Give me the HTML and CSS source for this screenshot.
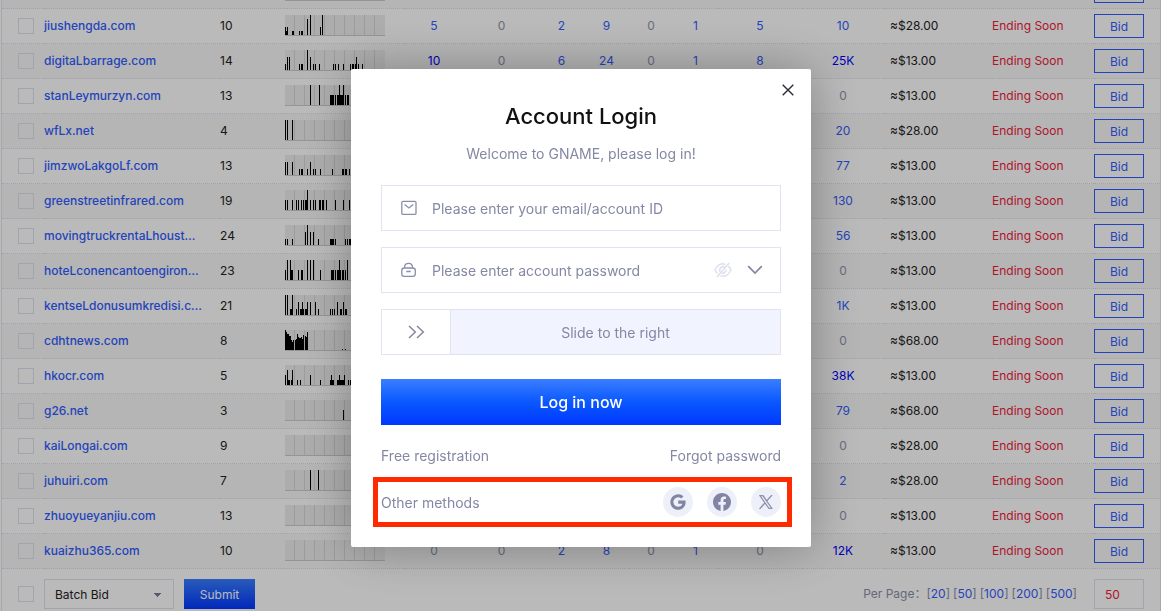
FILE: index.html
```html
<!DOCTYPE html>
<html lang="en">
<head>
<meta charset="utf-8">
<title>GNAME - Account Login</title>
<link rel="stylesheet" href="styles.css">
</head>
<body>
<main class="page">
  <table class="domains">
    <colgroup>
      <col class="c-check"><col><col class="c-length"><col class="c-chart">
      <col class="c-60"><col class="c-75"><col class="c-45"><col class="c-45"><col class="c-44"><col class="c-45"><col class="c-84"><col class="c-82">
      <col class="c-price"><col class="c-status"><col class="c-action">
    </colgroup>
    <tbody id="rows"></tbody>
  </table>
  <div class="batch">
    <input class="check" type="checkbox" aria-label="Select all">
    <select class="batch-select" aria-label="Batch action"><option>Batch Bid</option></select>
    <button class="submit" type="button">Submit</button>
    <div class="per-page">
      <label for="size">Per Page：</label>
      <nav class="sizes">
        <span>[<a href="#">20</a>]</span>
        <span>[<a href="#">50</a>]</span>
        <span>[<a href="#">100</a>]</span>
        <span>[<a href="#">200</a>]</span>
        <span>[<a href="#">500</a>]</span>
      </nav>
    </div>
    <input class="size" id="size" type="text" value="50">
  </div>
</main>

<div class="overlay">
  <section class="modal" role="dialog" aria-labelledby="title">
    <button class="close" type="button" aria-label="Close">
      <svg width="12" height="12" viewBox="0 0 12 12"><path d="M.7.7l10.6 10.6M11.3.7L.7 11.3" stroke="#2b2c36" stroke-width="1.4" fill="none"/></svg>
    </button>
    <h1 class="title" id="title">Account Login</h1>
    <p class="subtitle">Welcome to GNAME, please log in!</p>
    <form class="form">
      <div class="field">
        <svg class="icon" width="16" height="16" viewBox="0 0 16 16" fill="none" stroke="#8a8ea8" stroke-width="1.3"><rect x=".8" y="1.4" width="14.2" height="13" rx="1.2"/><path d="M3.6 4.6L7.9 8l4.3-3.4"/></svg>
        <input class="text" type="text" placeholder="Please enter your email/account ID" aria-label="Email or account ID">
      </div>
      <div class="field">
        <svg class="icon" width="16" height="16" viewBox="0 0 16 16" fill="none" stroke="#8a8ea8" stroke-width="1.3"><path d="M3.2 6h8.600c1.600 0 2.500.7 2.500 2.300v3.400c0 1.600-.9 2.600-2.500 2.600H3.200C1.600 14.300.8 13.300.8 11.700V8.300C.8 6.700 1.600 6 3.200 6zM3.400 6C3.400 2.700 5 1.300 7.500 1.300S11.600 2.700 11.600 6M5.300 9.500h4.400"/></svg>
        <input class="text" type="password" placeholder="Please enter account password" aria-label="Account password">
        <button class="bare" type="button" aria-label="Show password">
          <svg width="18" height="16" viewBox="0 0 18 16" fill="none" stroke="#dfe1ef" stroke-width="1.600"><path d="M11.500 2.400C6.500.800 2.700 3.500 1 8c.6 1.500 1.500 2.700 2.600 3.700M14.300 4.200C15.500 5.200 16.400 6.500 17 8c-1.700 4.300-5.700 7-10.600 5.700M10.800 5.400a3.200 3.200 0 0 0-4.600 4.300M12 7.800a3.200 3.200 0 0 1-4.200 3.200M15.200.9L3 15"/></svg>
        </button>
        <button class="bare" type="button" aria-label="More">
          <svg width="16" height="10" viewBox="0 0 16 10"><path d="M1.200 1.200L8 8l6.800-6.800" fill="none" stroke="#83879f" stroke-width="1.700"/></svg>
        </button>
      </div>
      <div class="slider">
        <button class="handle" type="button" aria-label="Slide">
          <svg width="17" height="14" viewBox="0 0 17 14"><path d="M1 1l6.300 6L1 13M9 1l6.300 6L9 13" fill="none" stroke="#83879f" stroke-width="1.500"/></svg>
        </button>
        <span class="slider-label">Slide to the right</span>
      </div>
      <button class="login" type="button">Log in now</button>
    </form>
    <div class="links"><a href="#">Free registration</a><a href="#">Forgot password</a></div>
    <div class="methods">
      <span>Other methods</span>
      <a class="social" href="#" aria-label="Google">
        <svg width="16" height="16" viewBox="0 0 16 16"><path d="M8.200 6.500h7.300c.8 5-2.300 9.300-7.300 9.300A7.800 7.800 0 1 1 13.500 2.300l-2.300 2.200A4.700 4.700 0 1 0 8.200 12.700c2.200 0 3.600-1.200 4.100-3H8.200z" fill="#8185a3"/></svg>
      </a>
      <a class="social" href="#" aria-label="Facebook">
        <svg width="18" height="18" viewBox="0 0 24 24"><path d="M24 12.070C24 5.440 18.630.070 12 .070S0 5.440 0 12.070c0 5.990 4.390 10.950 10.130 11.850v-8.380H7.080v-3.470h3.050V9.430c0-3.010 1.790-4.670 4.530-4.670 1.310 0 2.690.24 2.690.24v2.950h-1.510c-1.490 0-1.960.93-1.960 1.870v2.250h3.330l-.53 3.470h-2.800v8.380C19.610 23.020 24 18.060 24 12.070z" fill="#8185a3"/></svg>
      </a>
      <a class="social" href="#" aria-label="X">
        <svg width="14" height="14" viewBox="-4 -4 308 308"><path d="M178.570 127.150 290.270 0h-26.460l-97.030 110.380L89.340 0H0l117.130 166.930L0 300.250h26.460l102.400-116.590 81.800 116.590H300M36.010 19.540h40.650l187.130 262.130h-40.660" fill="#8185a3" stroke="#8185a3" stroke-width="9"/></svg>
      </a>
    </div>
  </section>
</div>
<script src="app.js"></script>
</body>
</html>
```
FILE: styles.css
```css
* { box-sizing: border-box; }
body {
  margin: 0;
  font-family: Inter, "Noto Sans CJK SC", sans-serif;
  font-size: 12px;
  color: #222;
}
button, input, select { font: inherit; color: inherit; border-radius: 0; }
a { color: #315dff; text-decoration: none; }

.page {
  height: 100vh;
  overflow: hidden;
  margin: 0 0 0 1px;
  border: solid #e4e7f0;
  border-width: 0 1px;
  background: #fff;
}
.domains {
  width: 100%;
  margin-top: -26px;
  table-layout: fixed;
  border-collapse: separate;
  border-spacing: 0;
}
.c-check { width: 42px; }
.c-length { width: 65px; }
.c-chart { width: 119px; }
.c-44 { width: 44px; }
.c-45 { width: 45px; }
.c-60 { width: 60px; }
.c-75 { width: 75px; }
.c-82 { width: 82px; }
.c-84 { width: 84px; }
.c-price { width: 108px; }
.c-status { width: 102px; }
.c-action { width: 66px; }

.domains td {
  height: 35px;
  padding: 0 0 2px;
  border-bottom: 1px dotted #dcdfec;
  vertical-align: middle;
  white-space: nowrap;
}
.domains tr:nth-child(odd) { background: #f9f9f9; }
.domains .select-cell { padding: 0 0 0 16px; }
.domains .chart-cell { padding: 0 0 1px; }
.domains .action { padding: 0; }
.domains .count { text-align: center; }
.domains .price { padding-left: 6px; }
.name { font-weight: 500; }
.zero { color: #9094a8; }
.high { color: #0000ff; }
.status { color: #f01b3b; }
.chart { display: block; }

.check {
  appearance: none;
  display: block;
  flex: none;
  width: 16px;
  height: 16px;
  margin: 0;
  border: 1px solid #dde1ec;
}
.bid {
  display: block;
  width: 50px;
  height: 24px;
  padding: 0;
  border: 1px solid #315dff;
  background: none;
  color: #315dff;
}

.batch {
  display: flex;
  align-items: center;
  gap: 10px;
  padding: 10px 16px;
}
.batch-select {
  appearance: none;
  width: 130px;
  height: 30px;
  padding: 0 10px;
  border: 1px solid #dde1ec;
  background:
    linear-gradient(to bottom right, #777c96 50%, transparent 50%) 113px 13px / 4px 4px no-repeat,
    linear-gradient(to bottom left, #777c96 50%, transparent 50%) 109px 13px / 4px 4px no-repeat,
    transparent;
}
.submit {
  width: 71px;
  height: 30px;
  padding: 0;
  border: 0;
  background: linear-gradient(#3a7eff, #0038ff);
  color: #fff;
}
.per-page {
  display: flex;
  margin-left: auto;
  padding-right: 7px;
  color: #8a8ea8;
  line-height: 18px;
}
.sizes { display: flex; gap: 3px; }
.size {
  width: 50px;
  height: 30px;
  padding: 0 10px;
  border: 1px solid #dde1ec;
  background: none;
  color: #f01b3b;
}

.overlay {
  position: fixed;
  inset: 0;
  display: flex;
  align-items: center;
  justify-content: center;
  padding: 5px 0 0 1px;
  background: rgba(0, 0, 0, .27);
}
.modal {
  position: relative;
  width: 460px;
  padding: 30px;
  border-radius: 2px;
  background: #fff;
  box-shadow: 1px 1px 50px rgba(0, 0, 0, .3);
  color: #8488a3;
  font-size: 14px;
}
.modal a { color: #8488a3; }
.close {
  position: absolute;
  top: 11px;
  right: 13px;
  display: grid;
  place-items: center;
  width: 20px;
  height: 20px;
  padding: 0;
  border: 0;
  background: none;
}
.title {
  margin: 0;
  color: #111;
  font-size: 22px;
  font-weight: 500;
  line-height: 34px;
  text-align: center;
}
.subtitle {
  margin: 11px 0 21px;
  line-height: 20px;
  text-align: center;
}
.form { display: grid; gap: 16px; }
.field, .slider {
  display: flex;
  align-items: center;
  height: 46px;
  border: 1px solid #e1e4f0;
}
.field { gap: 15px; padding: 0 17px 0 19px; }
.icon { flex: none; }
.text {
  flex: 1;
  min-width: 0;
  padding: 0;
  border: 0;
  outline: 0;
  background: none;
}
.text::placeholder { color: #8488a3; opacity: 1; }
.bare { display: flex; padding: 0; border: 0; background: none; }
.slider { background: #f1f3ff; }
.handle {
  display: grid;
  place-items: center;
  width: 69px;
  height: 44px;
  padding: 0;
  border: 0;
  border-right: 1px solid #e1e4f0;
  background: #fff;
}
.slider-label { flex: 1; text-align: center; }
.login {
  height: 46px;
  margin-top: 8px;
  border: 0;
  background: linear-gradient(#3a7eff, #0a58ff 50%, #0038ff);
  color: #fff;
  font-size: 16px;
  font-weight: 500;
}
.links {
  display: flex;
  justify-content: space-between;
  margin: 21px 0;
  line-height: 20px;
}
.methods {
  position: relative;
  display: flex;
  align-items: center;
  gap: 14px;
}
.methods span { margin-right: auto; }
.methods::after {
  content: "";
  position: absolute;
  inset: -10px -11px -10px -8px;
  border: 5px solid #ff2a00;
  pointer-events: none;
}
.social {
  display: grid;
  place-items: center;
  width: 30px;
  height: 30px;
  border-radius: 50%;
  background: #eef0f9;
}
```
FILE: app.js
```js
// name, length, bars ("x:height" or "from-to:height"), counts, price
const rows = [
  ["", "", "", ["", "", "", "", "", "", "", ""], ""],
  ["jiushengda.com", 10, "0:8 1:4 2:8 7-8:4 14:4 16-17:4 22:16 25:20 35:8 37:20", [5, 0, 2, 9, 0, 1, 5, 10], 28],
  ["digitaLbarrage.com", 14, "0:6 2:13 4:13 14:6 16-17:6 22:20 25:13 28:6 30:6 34:6 48:6 50:6 53:6 58:6 65:6 67-68:6 70:6 71:13 73:6 77:6", ["10!", 0, 6, 24, 0, 1, 8, "25K!"], 13],
  ["stanLeymurzyn.com", 13, "25:20 34:20 45-48:10 50:10 52-58:10 54:20 58:20 60:10 62-63:10", ["", "", "", "", "", "", "", 0], 13],
  ["wfLx.net", 4, "0:20 2:20 7:20", ["", "", "", "", "", "", "", 20], 28],
  ["jimzwoLakgoLf.com", 13, "0:13 2:13 7:13 14:6 16-17:6 22:6 25:13 28:6 30:6 35:6 47:6 57-58:6 60-61:6 64:6", ["", "", "", "", "", "", "", 77], 13],
  ["greenstreetinfrared.com", 19, "0:10 2:10 7:10 11:10 13:10 16:10 18:10 20-21:10 22:20 25:10 28:10 30:10 34-35:10 37-38:10 41:10 50:10 58:10 64:10", ["", "", "", "", "", "", "", 130], 13],
  ["movingtruckrentaLhoust…", 24, "0:6 2:6 7:6 20:13 22:20 25:13 28:13 33:6 45-48:6 50:6 60:6 62:6 64-65:6", ["", "", "", "", "", "", "", 56], 13],
  ["hoteLconencantoengiron…", 23, "0:10 2:20 5:20 6-7:10 13:10 16-17:10 22:20 25:20 28:20 35:10 46-48:10 50:10 52-55:10 54:20 57-58:10 60:10 62:20", ["", "", "", "", "", "", "", 0], 13],
  ["kentseLdonusumkredisi.c…", 21, "0:20 2:20 5-6:6 7:20 11:6 13:13 15-16:6 17:13 18:6 20-21:6 22:13 25:13 30:13 33:6 45:6 47:6 49:6 52:13 55-56:6 58:13 60-61:6", ["", "", "", "", "", "", "", "1K"], 13],
  ["cdhtnews.com", 8, "0:20 1:18 2-3:16 4-5:14 6:10 7:8 8:10 10:10 11:11 12:16 13:13 14-15:12 16:13 17:11 18:15 20:14 21:13 22:18 57:1 60:1", ["", "", "", "", "", "", "", 0], 68],
  ["hkocr.com", 5, "0:10 2:15 3-4:5 6:5 7:15 12:5 15:5 25:10 35:5 45:5 46:10 47-48:5 52-53:5 54:10 55-58:5 59:10 63:5 65:5", ["", "", "", "", "", "", "", "38K!"], 13],
  ["g26.net", 3, "58:10", ["", "", "", "", "", "", "", 79], 68],
  ["kaiLongai.com", 9, "", ["", "", "", "", "", "", "", 0], 28],
  ["juhuiri.com", 7, "25:20 33:20", ["", "", "", "", "", "", "", 2], 28],
  ["zhuoyueyanjiu.com", 13, "", ["", "", "", "", "", "", "", 0], 13],
  ["kuaizhu365.com", 10, "", [0, 0, 2, 8, 0, 1, 0, "12K!"], 13],
];

function chart(bars) {
  let svg = '<svg class="chart" width="100" height="21" shape-rendering="crispEdges"><rect width="100" height="21" fill="#eee"/>';
  for (let x = 9; x < 99; x += 10) svg += `<rect x="${x}" width="1" height="20" fill="#d6d6d6"/>`;
  svg += '<rect y="20" width="100" height="1" fill="#ccc"/>';
  for (const bar of bars.split(" ").filter(Boolean)) {
    const [span, height] = bar.split(":");
    const [from, to = from] = span.split("-").map(Number);
    svg += `<rect x="${from}" y="${20 - height}" width="${to - from + 1}" height="${height}"/>`;
  }
  return svg + "</svg>";
}

function count(value) {
  if (value === "") return "";
  if (value === 0) return '<span class="zero">0</span>';
  const text = String(value);
  return `<a href="#"${text.endsWith("!") ? ' class="high"' : ""}>${text.replace("!", "")}</a>`;
}

document.getElementById("rows").innerHTML = rows.map(([name, length, bars, counts, price]) => `<tr>
  <td class="select-cell"><input class="check" type="checkbox" aria-label="Select ${name}"></td>
  <td><a class="name" href="#">${name}</a></td>
  <td>${length}</td>
  <td class="chart-cell">${chart(bars)}</td>
  ${counts.map(value => `<td class="count">${count(value)}</td>`).join("")}
  <td class="price">${price ? `≈$${price}.00` : ""}</td>
  <td class="status">${price ? "Ending Soon" : ""}</td>
  <td class="action"><button class="bid" type="button">${price ? "Bid" : ""}</button></td>
</tr>`).join("");
```
